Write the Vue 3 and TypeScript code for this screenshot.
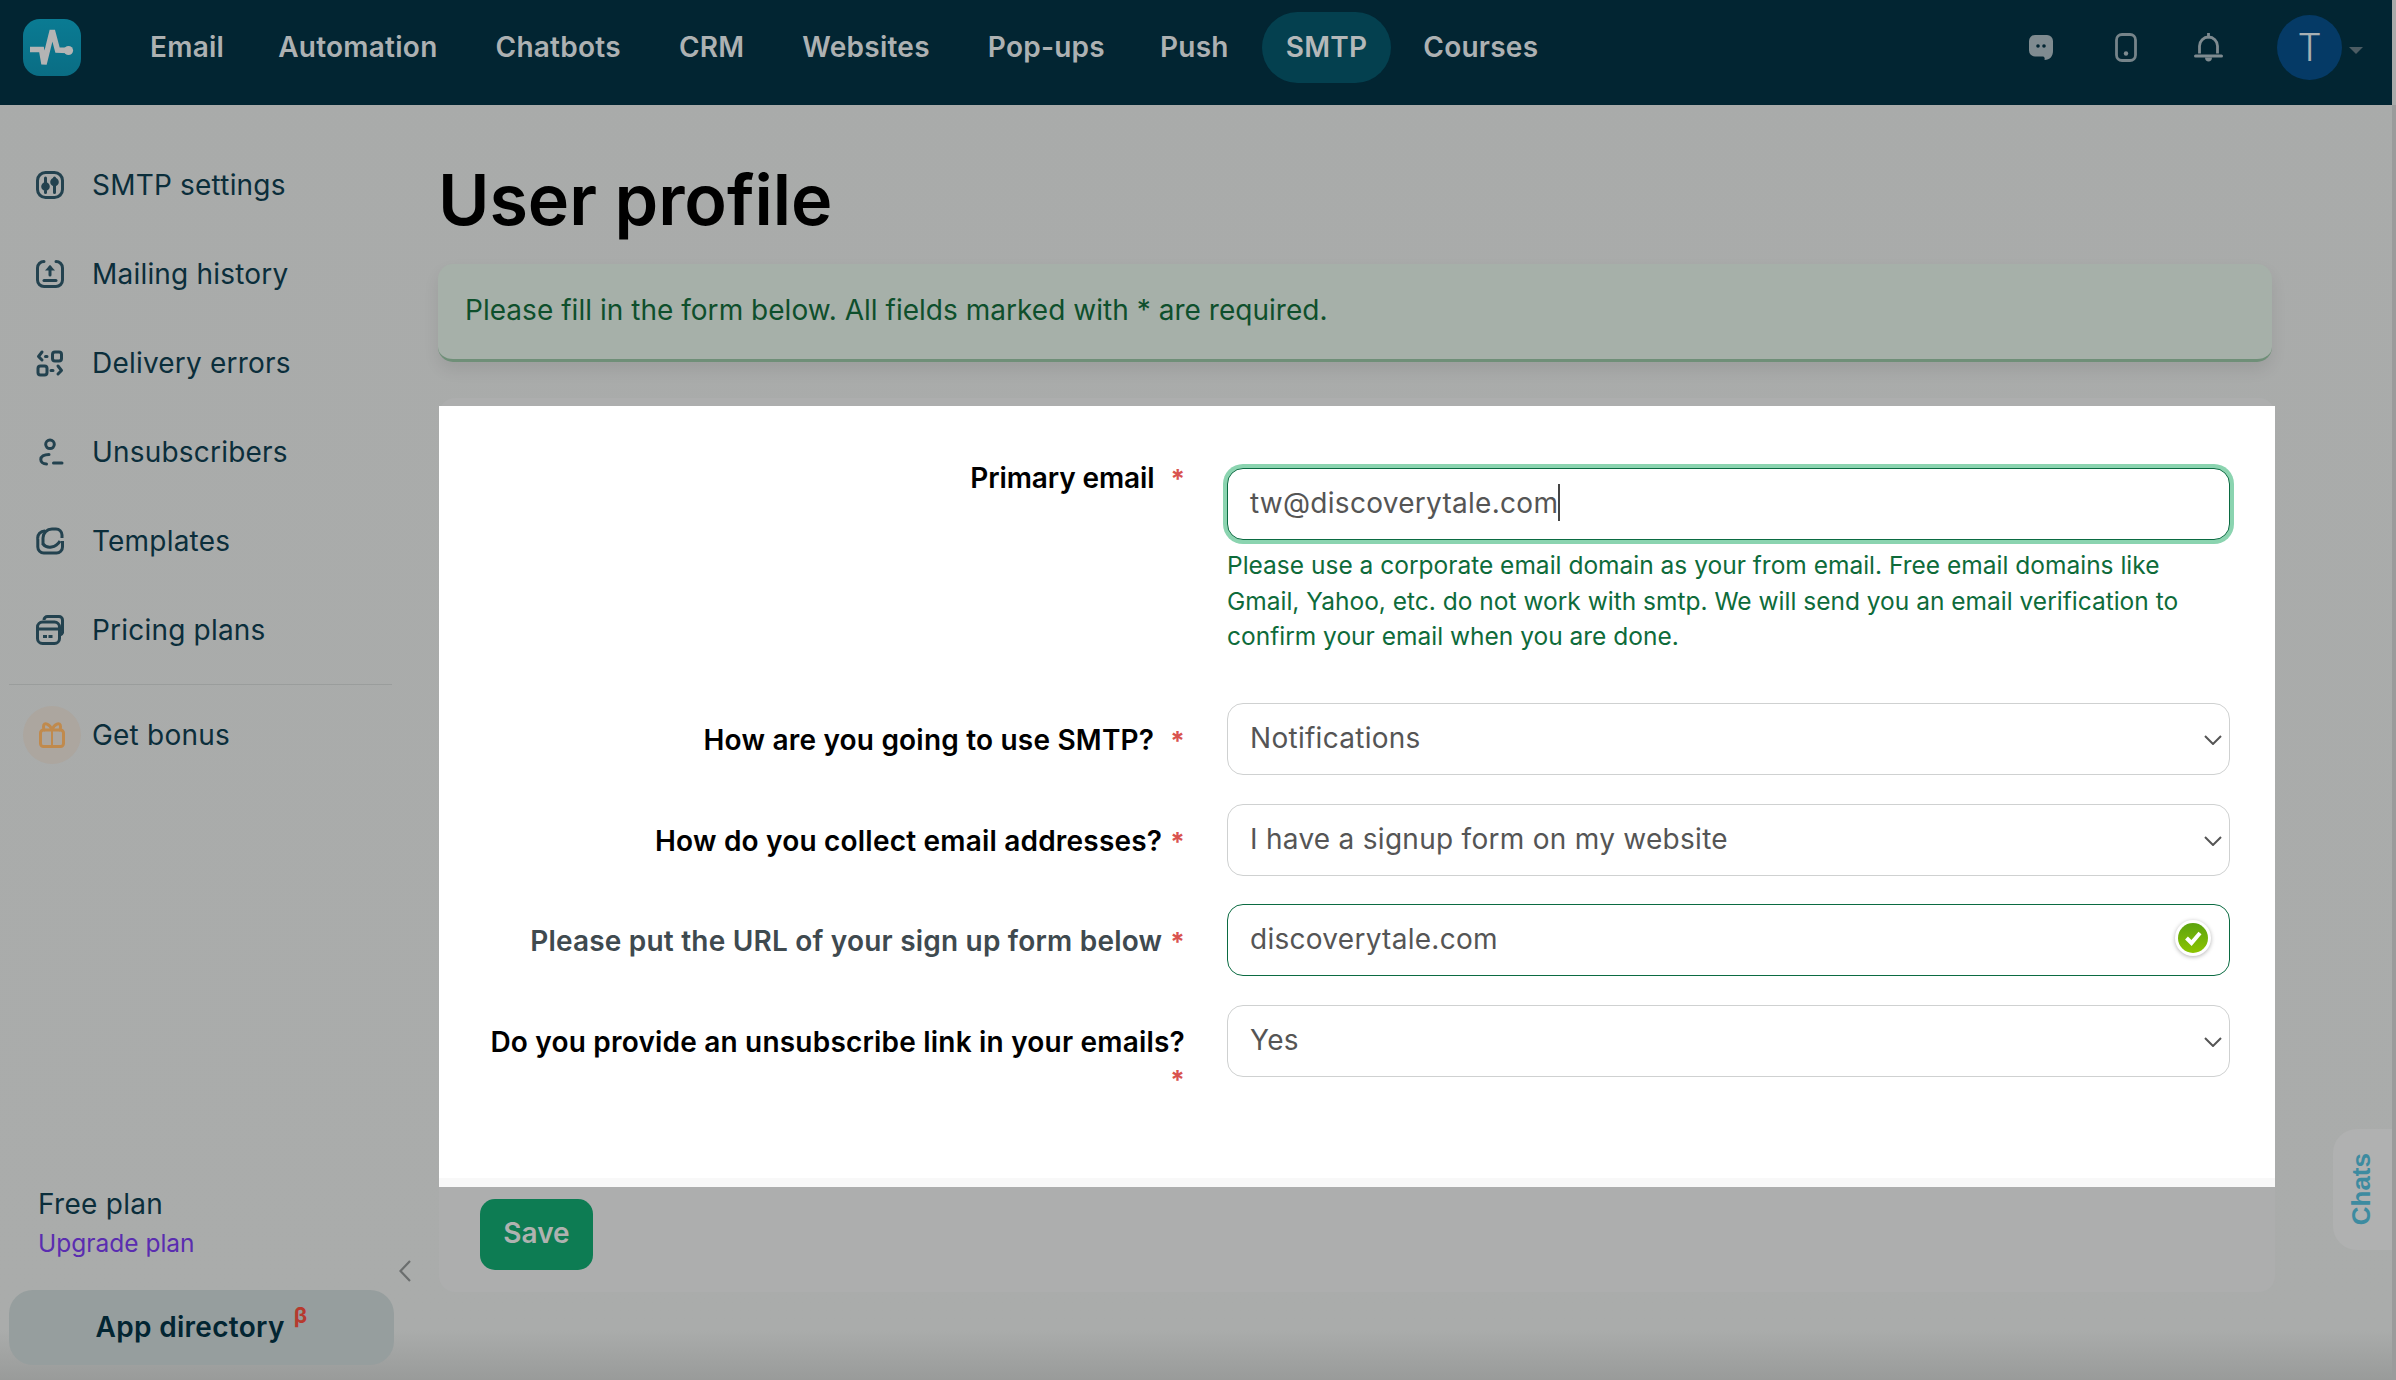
<script setup lang="ts">
const navItems: string[] = ['Email', 'Automation', 'Chatbots', 'CRM', 'Websites', 'Pop-ups', 'Push', 'SMTP', 'Courses']
const activeNav = 'SMTP'
</script>

<template>
  <div class="page">
    <div class="shell">
      <header class="topbar">
        <div class="logo">
          <svg viewBox="0 0 58 57" width="58" height="57">
            <path d="M7 30.500H18.500L21 45L29.300 11.500L34.500 31L45 31.500" fill="none" stroke="#b4b4b4" stroke-width="5.500" />
            <circle cx="45.500" cy="31.500" r="4.600" fill="#b4b4b4" />
          </svg>
        </div>
        <nav class="nav">
          <a v-for="item in navItems" :key="item" class="nav-item" :class="{ active: item === activeNav }">{{ item }}</a>
        </nav>
        <div class="top-actions">
          <svg class="ic-chat" viewBox="0 0 24 25" width="24" height="25">
            <path d="M6 0H18A6 6 0 0 1 24 6V16C24 21 21 25 15.500 25C16 23.500 15.500 21.500 14 21.500H6A6 6 0 0 1 0 15.500V6A6 6 0 0 1 6 0Z" fill="#7f8b90" />
            <circle cx="9" cy="11" r="1.800" fill="#022532" />
            <circle cx="15" cy="11" r="1.800" fill="#022532" />
          </svg>
          <svg class="ic-phone" viewBox="0 0 22 29" width="22" height="29">
            <rect x="1.500" y="1.500" width="19" height="26" rx="5.500" fill="none" stroke="#76848a" stroke-width="2.800" />
            <circle cx="11" cy="20.500" r="2.200" fill="#7f8b90" />
          </svg>
          <svg class="ic-bell" viewBox="0 0 29 29" width="29" height="29">
            <path d="M14.500 4A9 9 0 0 0 5.500 13V20.500M14.500 4A9 9 0 0 1 23.500 13V20.500" fill="none" stroke="#7f8b90" stroke-width="2.800" />
            <path d="M14.500 0.500V4" stroke="#7f8b90" stroke-width="2.800" stroke-linecap="round" />
            <path d="M1.500 23H27.500" stroke="#7f8b90" stroke-width="3" stroke-linecap="round" />
            <path d="M11 24.500H18C18 27 16.500 28.500 14.500 28.500S11 27 11 24.500Z" fill="#7f8b90" />
          </svg>
          <div class="avatar">T</div>
          <span class="caret"></span>
        </div>
      </header>

      <div class="body">
        <aside class="sidebar">
          <ul class="menu">
            <li class="menu-item">
              <svg viewBox="0 0 28 28" width="28" height="28" fill="none" stroke="#23424f" stroke-width="3">
                <rect x="1.500" y="1.500" width="25" height="25" rx="8" />
                <path d="M9.500 7V12M9.500 20V21.500M18.500 7V7.500M18.500 15V21.500" stroke-linecap="round" />
                <circle cx="9.500" cy="15.500" r="2.800" fill="#23424f" />
                <circle cx="18.500" cy="11" r="2.800" fill="#23424f" />
              </svg>
              <span>SMTP settings</span>
            </li>
            <li class="menu-item">
              <svg viewBox="0 0 28 28" width="28" height="28" fill="none" stroke="#23424f" stroke-width="3">
                <path d="M8 1.500A6.500 6.500 0 0 0 1.500 8V20A6.500 6.500 0 0 0 8 26.500H20A6.500 6.500 0 0 0 26.500 20V8A6.500 6.500 0 0 0 20 1.500" stroke-linecap="round" />
                <path d="M14 15V7" stroke-linecap="round" />
                <path d="M9 10.500L14 5L19 10.500Z" fill="#23424f" stroke="none" />
                <path d="M8 20.500H20" stroke-linecap="round" />
              </svg>
              <span>Mailing history</span>
            </li>
            <li class="menu-item">
              <svg viewBox="0 0 28 28" width="28" height="28" fill="none" stroke="#23424f" stroke-width="3">
                <path d="M6 3L2.500 7.500L6 11M9.500 7.500H11" stroke-linecap="round" stroke-linejoin="round" />
                <rect x="16.500" y="3" width="9" height="9" rx="2.500" />
                <rect x="2" y="17" width="9" height="9" rx="2.500" />
                <path d="M15 21.500H17M22 17L25.500 21.500L22 25" stroke-linecap="round" stroke-linejoin="round" />
              </svg>
              <span>Delivery errors</span>
            </li>
            <li class="menu-item">
              <svg viewBox="0 0 28 30" width="28" height="30" fill="none" stroke="#23424f" stroke-width="3">
                <circle cx="14" cy="7.300" r="4.300" />
                <path d="M13 17.500C8 17.500 4.800 19.500 4.800 22.500C4.800 25 7 27 10.500 27" stroke-linecap="round" />
                <path d="M17.500 26H26" stroke-linecap="round" />
              </svg>
              <span>Unsubscribers</span>
            </li>
            <li class="menu-item">
              <svg viewBox="0 0 28 28" width="28" height="28" fill="none" stroke="#23424f" stroke-width="3">
                <path d="M7 18V11A9 9 0 0 1 16 2H20A6 6 0 0 1 26 8V11" />
                <path d="M1.800 12V20A6 6 0 0 0 7.800 26H20.500A6 6 0 0 0 26.500 20V14" />
                <path d="M1.800 12A7 7 0 0 1 9 4" />
                <path d="M7 17C11 22 20 21 24 14" />
              </svg>
              <span>Templates</span>
            </li>
            <li class="menu-item">
              <svg viewBox="0 0 28 30" width="28" height="30" fill="none" stroke="#23424f" stroke-width="3">
                <path d="M8 5A3.500 3.500 0 0 1 11.500 1.500H23A3.500 3.500 0 0 1 26.500 5V16A3.500 3.500 0 0 1 24 20" />
                <rect x="1.500" y="7" width="22" height="21.500" rx="5" />
                <path d="M1.500 14H23.500" />
                <path d="M7 21.500H17" stroke-dasharray="4 1.500" />
              </svg>
              <span>Pricing plans</span>
            </li>
          </ul>
          <div class="divider"></div>
          <div class="menu-item bonus">
            <div class="bonus-ic">
              <svg viewBox="0 0 26 26" width="26" height="26" fill="none" stroke="#c08a4d" stroke-width="3">
                <rect x="1.500" y="8" width="23" height="16.500" rx="3" />
                <path d="M13 8V24.500" stroke-width="2" />
                <path d="M13 8C11 2 4.500 -0.500 4.500 4.500C4.500 6.500 5 8 6 8M13 8C15 2 21.500 -0.500 21.500 4.500C21.500 6.500 21 8 20 8" />
              </svg>
            </div>
            <span>Get bonus</span>
          </div>

          <div class="plan">
            <div class="plan-name">Free plan</div>
            <a class="plan-link">Upgrade plan</a>
          </div>
          <div class="collapse-row">
            <svg viewBox="0 0 12 22" width="12" height="22" fill="none" stroke="#6b6e6e" stroke-width="2.200">
              <path d="M11 1L1.500 11L11 21" />
            </svg>
          </div>
          <div class="app-dir">App directory<sup>β</sup></div>
        </aside>

        <main class="main">
          <h1 class="title">User profile</h1>
          <div class="alert">Please fill in the form below. All fields marked with * are required.</div>

          <section class="card">
            <div class="form">
              <div class="row row-email">
                <label class="label label-up">Primary email<span class="star wide">*</span></label>
                <div class="control">
                  <div class="field focused">tw@discoverytale.com<span class="cursor"></span></div>
                  <p class="hint">Please use a corporate email domain as your from email. Free email domains like Gmail, Yahoo, etc. do not work with smtp. We will send you an email verification to confirm your email when you are done.</p>
                </div>
              </div>
              <div class="row">
                <label class="label">How are you going to use SMTP?<span class="star wide">*</span></label>
                <div class="control">
                  <div class="field select">
                    Notifications
                    <svg class="chev" viewBox="0 0 18 10" width="18" height="10" fill="none" stroke="#555" stroke-width="2"><path d="M1 1L9 9L17 1" /></svg>
                  </div>
                </div>
              </div>
              <div class="row">
                <label class="label">How do you collect email addresses?<span class="star">*</span></label>
                <div class="control">
                  <div class="field select">
                    I have a signup form on my website
                    <svg class="chev" viewBox="0 0 18 10" width="18" height="10" fill="none" stroke="#555" stroke-width="2"><path d="M1 1L9 9L17 1" /></svg>
                  </div>
                </div>
              </div>
              <div class="row">
                <label class="label muted">Please put the URL of your sign up form below<span class="star">*</span></label>
                <div class="control">
                  <div class="field valid">
                    discoverytale.com
                    <span class="ok">
                      <svg viewBox="0 0 30 30" width="30" height="30">
                        <defs>
                          <linearGradient id="okGrad" x1="0" y1="0" x2="0" y2="1">
                            <stop offset="0" stop-color="#5ca30f" />
                            <stop offset="1" stop-color="#8cc400" />
                          </linearGradient>
                        </defs>
                        <circle cx="15" cy="15" r="15" fill="url(#okGrad)" />
                        <path d="M8.500 15L13.500 20L22 10" fill="none" stroke="#fff" stroke-width="4" />
                      </svg>
                    </span>
                  </div>
                </div>
              </div>
              <div class="row">
                <label class="label">Do you provide an unsubscribe link in your emails?<span class="star block">*</span></label>
                <div class="control">
                  <div class="field select">
                    Yes
                    <svg class="chev" viewBox="0 0 18 10" width="18" height="10" fill="none" stroke="#555" stroke-width="2"><path d="M1 1L9 9L17 1" /></svg>
                  </div>
                </div>
              </div>
            </div>
            <div class="card-foot">
              <button class="save" type="button">Save</button>
            </div>
          </section>
        </main>
      </div>
    </div>
    <div class="edge"></div>
    <div class="chats"><span>Chats</span></div>
  </div>
</template>

<style>
html, body { margin: 0; padding: 0; background: #a9abaa; }
</style>

<style scoped>
.page {
  position: relative;
  display: flex;
  width: 2396px;
  height: 1380px;
  overflow: hidden;
  font-family: Inter, "Noto Sans", sans-serif;
  background: linear-gradient(180deg, #a9abaa 0, #aaacab 1330px, #999b9a 1380px);
}
.shell { width: 2392px; display: flex; flex-direction: column; }
.edge { width: 4px; background: linear-gradient(180deg, #a9abaa 0, #a9abaa 105px, #9a9b9b 105px); }

.topbar {
  height: 105px;
  flex: none;
  background: #022532;
  display: flex;
  align-items: center;
  padding: 0 29px 10px 23px;
  box-sizing: border-box;
}
.logo {
  width: 58px;
  height: 57px;
  border-radius: 17px;
  background: linear-gradient(180deg, #0a7b93, #0a6d84);
  flex: none;
}
.logo svg { display: block; }
.nav { display: flex; align-items: center; margin-left: 40px; }
.nav-item {
  padding: 0 29px;
  height: 71px;
  line-height: 71px;
  font-size: 28px;
  font-weight: 600;
  color: #adb1b2;
  border-radius: 36px;
  letter-spacing: 0.25px;
}
.nav-item:first-child { margin-right: -4px; }
.nav-item:nth-child(7) { margin-left: -3px; }
.nav-item.active { background: #04404f; color: #b4b8b9; padding: 0 24px; margin: 0 3px 0 4px; }
.top-actions { margin-left: auto; display: flex; align-items: center; }
.ic-phone { margin-left: 62px; }
.ic-bell { margin-left: 57px; }
.avatar {
  margin-left: 54px;
  width: 65px;
  height: 65px;
  border-radius: 50%;
  background: #053a66;
  color: #a9b0b3;
  font-size: 38px;
  font-weight: 300;
  text-align: center;
  line-height: 65px;
}
.caret {
  margin-left: 7px;
  margin-top: 6px;
  border-left: 7px solid transparent;
  border-right: 7px solid transparent;
  border-top: 7px solid #4c5c63;
}

.body { flex: 1; display: flex; min-height: 0; }
.sidebar { width: 423px; flex: none; display: flex; flex-direction: column; padding: 35px 0 15px; box-sizing: border-box; }
.menu { list-style: none; margin: 0; padding: 0; }
.menu-item {
  display: flex;
  align-items: center;
  height: 89px;
  padding-left: 36px;
  font-size: 28px;
  letter-spacing: 0.2px;
  color: #0b2e3b;
}
.menu-item svg { flex: none; }
.menu-item > span { margin-left: 28px; }
.divider { height: 1px; background: #9a9d9c; margin: 10px 31px 0 9px; }
.bonus { padding-left: 23px; margin-top: 10px; height: 80px; }
.bonus > span { margin-left: 11px; }
.bonus-ic {
  width: 58px;
  height: 58px;
  border-radius: 50%;
  background: #aca69f;
  display: flex;
  align-items: center;
  justify-content: center;
}
.plan { margin-top: auto; padding-left: 38px; }
.plan-name { font-size: 28px; line-height: 40px; color: #0b2e3b; letter-spacing: 0.3px; }
.plan-link { display: block; font-size: 24.500px; line-height: 38px; color: #5a2db0; }
.collapse-row { display: flex; justify-content: flex-end; padding-right: 12px; height: 22px; margin-top: -2px; }
.app-dir {
  margin: 8px 29px 0 9px;
  height: 75px;
  line-height: 75px;
  border-radius: 24px;
  background: #969e9e;
  color: #022532;
  font-size: 28px;
  font-weight: 600;
  letter-spacing: 0.3px;
  text-align: center;
}
.app-dir sup { color: #b63a2e; font-size: 22px; font-weight: 700; margin-left: 9px; line-height: 0; vertical-align: 14px; }

.main { flex: 1; padding: 0 117px 0 16px; min-width: 0; }
.title {
  margin: 52px 0 0 -1px;
  font-size: 70px;
  line-height: 86px;
  font-weight: 600;
  color: #000;
  letter-spacing: -0.05px;
}
.alert {
  margin: 21px 3px 0 -1px;
  height: 98px;
  box-sizing: border-box;
  background: #a6b0a9;
  border-bottom: 3px solid #6f8f78;
  border-radius: 15px;
  padding: 0 27px;
  line-height: 92px;
  font-size: 28px;
  letter-spacing: 0.03px;
  color: #0e4f2c;
  box-shadow: 0 8px 16px rgba(0, 0, 0, 0.08);
}
.card {
  margin-top: 36px;
  background: #adaeae;
  border-radius: 16px;
  padding-top: 8px;
}
.form {
  background: #fff;
  border-bottom: 9px solid #f8f8f8;
  height: 781px;
  box-sizing: border-box;
  padding: 62px 45px 0 0;
  display: flex;
  flex-direction: column;
  gap: 28.600px;
}
.row { display: grid; grid-template-columns: 746px 1003px; column-gap: 42px; height: 72px; }
.row-email { height: 206.400px; }
.label {
  display: block;
  text-align: right;
  font-size: 28px;
  letter-spacing: 0.2px;
  line-height: 38px;
  font-weight: 600;
  color: #000;
  padding-top: 18px;
  padding-left: 40px;
}
.label-up { padding-top: 0; margin-top: -9px; letter-spacing: -0.1px; }
.label.muted { color: #3f4a4f; }
.star { color: #d9534f; margin-left: 8px; font-size: 26px; font-weight: 700; }
.star.wide { margin-left: 16px; }
.star.block { display: block; margin-left: 0; line-height: 38px; }
.field {
  position: relative;
  height: 72px;
  box-sizing: border-box;
  border: 1.500px solid #cfd1d1;
  border-radius: 16px;
  padding: 0 22px;
  line-height: 69px;
  font-size: 28px;
  letter-spacing: 0.28px;
  color: #555;
  background: #fff;
}
.focused { border-color: #0b6b42; box-shadow: 0 0 0 4px #8bd4b0; }
.valid { border-color: #0b6b42; }
.cursor {
  display: inline-block;
  width: 2px;
  height: 37px;
  background: #444;
  vertical-align: -8px;
}
.chev { position: absolute; right: 7px; top: 31px; }
.ok {
  position: absolute;
  right: 18px;
  top: 15px;
  width: 36px;
  height: 36px;
  border-radius: 50%;
  background: #fff;
  box-shadow: 0 1px 4px rgba(0, 0, 0, 0.3);
  display: flex;
  align-items: center;
  justify-content: center;
}
.hint {
  margin: 8px 0 0;
  font-size: 24.500px;
  line-height: 35.500px;
  color: #0e6b3a;
}
.card-foot { padding: 12px 0 22px 41px; border-radius: 0 0 16px 16px; }
.save {
  display: block;
  width: 113px;
  height: 71px;
  border: 0;
  border-radius: 15px;
  background: #0d7c53;
  color: #afb2b0;
  font-family: inherit;
  font-size: 28px;
  font-weight: 600;
  padding: 0 0 3px;
}
.chats {
  position: absolute;
  left: 2333px;
  top: 1129px;
  width: 59px;
  height: 121px;
  background: #b0b1b1;
  border-radius: 24px 0 0 24px;
  display: flex;
  align-items: center;
  justify-content: center;
}
.chats span {
  writing-mode: vertical-rl;
  transform: rotate(180deg);
  font-family: "Liberation Sans", Arial, sans-serif;
  font-size: 26px;
  font-weight: 700;
  color: #3d8ba0;
  margin-right: 2px;
}
</style>
